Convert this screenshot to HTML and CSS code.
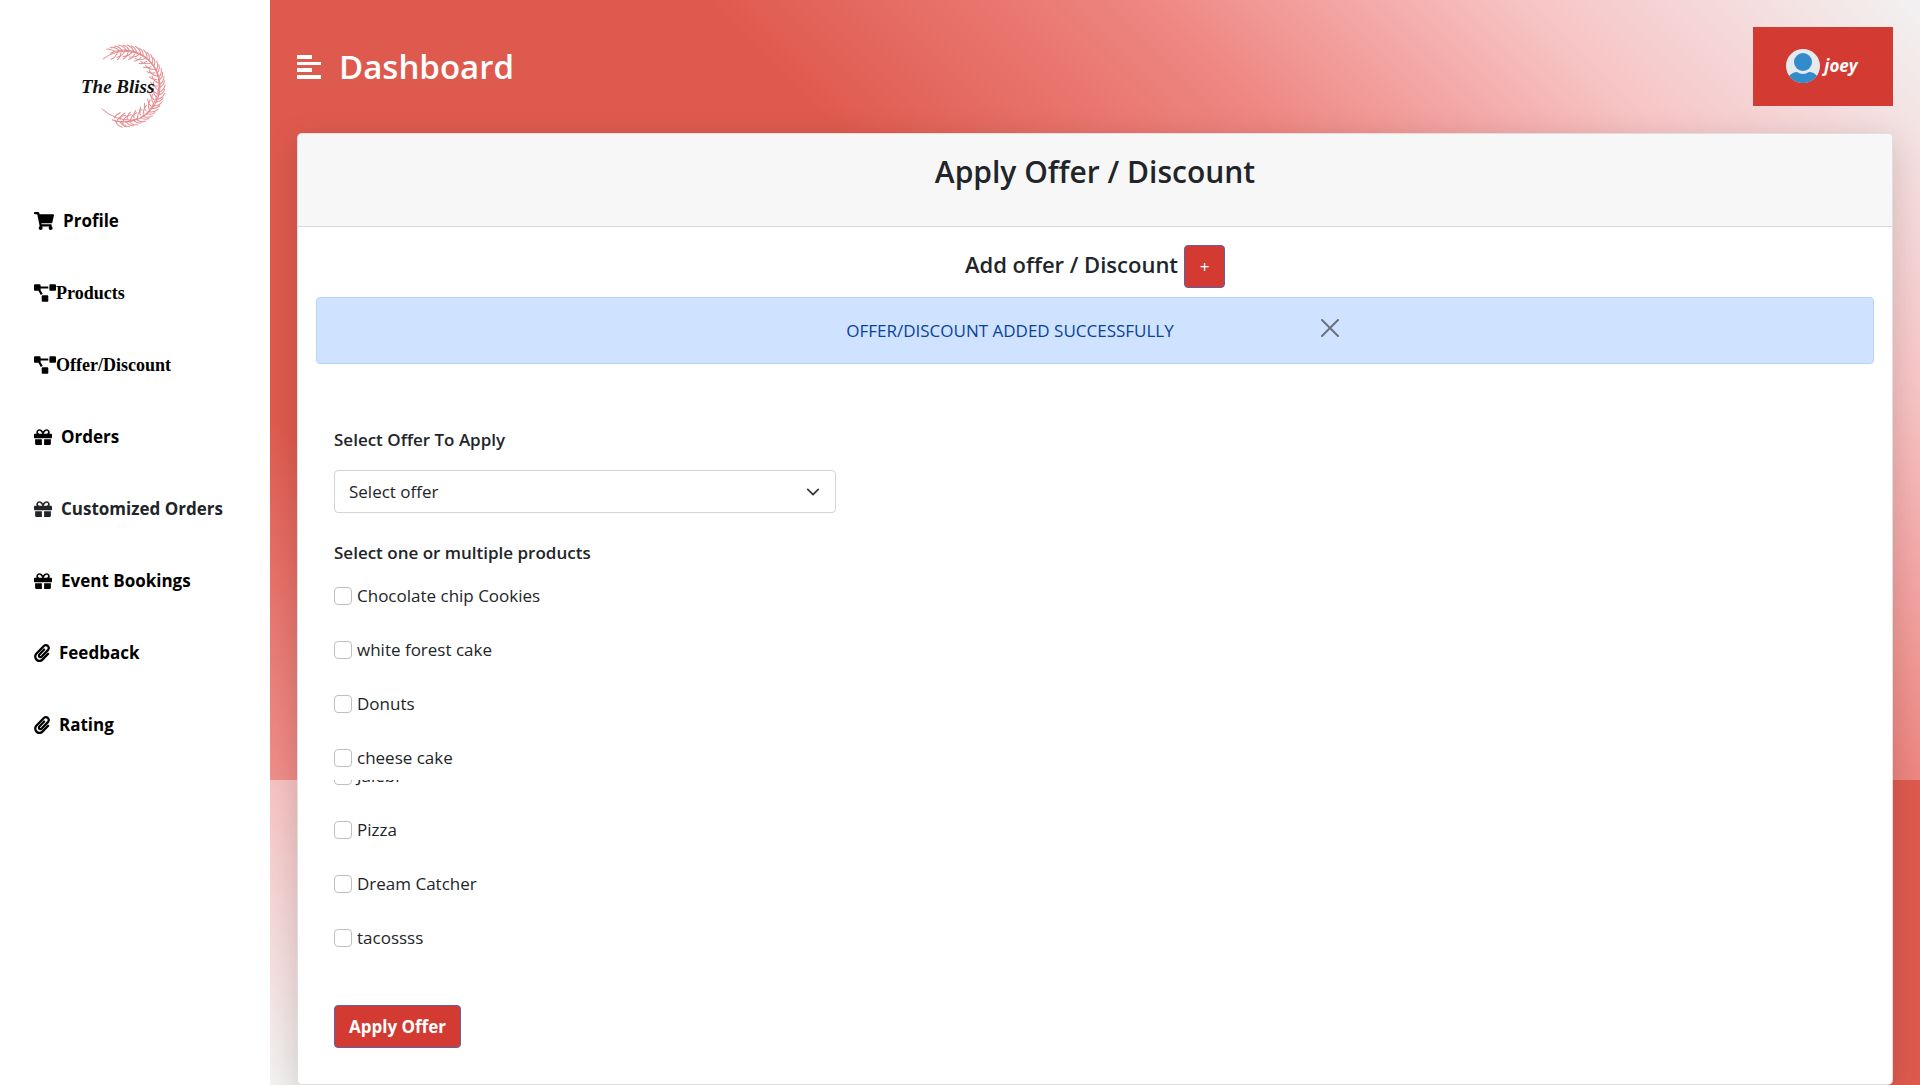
FILE: index.html
```html
<!DOCTYPE html>
<html lang="en">
<head>
<meta charset="utf-8">
<meta name="viewport" content="width=device-width, initial-scale=1">
<title>Dashboard</title>
<link rel="stylesheet" href="styles.css">
</head>
<body>
<svg class="sprite" aria-hidden="true">
  <symbol id="cart" viewBox="0 0 576 512"><path d="M528.12 301.319l47.273-208C578.806 78.301 567.391 64 551.99 64H159.208l-9.166-44.81C147.758 8.021 137.93 0 126.529 0H24C10.745 0 0 10.745 0 24v16c0 13.255 10.745 24 24 24h69.883l70.248 343.435C147.325 417.1 136 435.222 136 456c0 30.928 25.072 56 56 56s56-25.072 56-56c0-15.674-6.447-29.835-16.824-40h209.647C430.447 426.165 424 440.326 424 456c0 30.928 25.072 56 56 56s56-25.072 56-56c0-22.172-12.888-41.332-31.579-50.405l5.517-24.276c3.413-15.018-8.002-29.319-23.403-29.319H218.117l-6.545-32h293.145c11.206 0 20.92-7.754 23.403-18.681z"/></symbol>
  <symbol id="diagram" viewBox="0 0 640 512"><path d="M384 320H256c-17.67 0-32 14.33-32 32v128c0 17.67 14.33 32 32 32h128c17.67 0 32-14.33 32-32V352c0-17.67-14.33-32-32-32zM192 32c0-17.67-14.33-32-32-32H32C14.33 0 0 14.33 0 32v128c0 17.67 14.33 32 32 32h95.72l73.16 128.04C211.98 300.98 232.4 288 256 288h.28L192 175.51V128h224V64H192V32zM608 0H480c-17.67 0-32 14.33-32 32v128c0 17.67 14.33 32 32 32h128c17.67 0 32-14.33 32-32V32c0-17.67-14.33-32-32-32z"/></symbol>
  <symbol id="gift" viewBox="0 0 512 512"><path d="M32 448c0 17.7 14.3 32 32 32h160V320H32v128zm256 32h160c17.7 0 32-14.3 32-32V320H288v160zm192-320h-42.1c6.2-12.1 10.1-25.5 10.1-40 0-48.5-39.5-88-88-88-41.6 0-68.5 21.3-103 68.3-34.5-47-61.4-68.3-103-68.3-48.5 0-88 39.5-88 88 0 14.5 3.8 27.9 10.1 40H32c-17.7 0-32 14.3-32 32v80c0 8.8 7.2 16 16 16h480c8.8 0 16-7.2 16-16v-80c0-17.7-14.3-32-32-32zm-326.1 0c-22.1 0-40-17.9-40-40s17.9-40 40-40c19.9 0 34.6 3.3 86.1 80h-86.1zm206.1 0h-86.1c51.4-76.5 65.7-80 86.1-80 22.1 0 40 17.9 40 40s-17.9 40-40 40z"/></symbol>
  <symbol id="clip" viewBox="0 0 448 512"><path d="M43.246 466.142c-58.43-60.289-57.341-157.511 1.386-217.581L254.392 34c44.316-45.332 116.351-45.336 160.671 0 43.89 44.894 43.943 117.329 0 162.276L232.214 383.128c-29.855 30.537-78.633 30.111-107.982-.998-28.275-29.97-27.368-77.473 1.452-106.953l143.743-146.835c6.182-6.314 16.312-6.422 22.626-.241l22.861 22.379c6.315 6.182 6.422 16.312.241 22.626L171.427 319.927c-4.932 5.045-5.236 13.428-.648 18.292 4.372 4.634 11.245 4.711 15.688.165l182.849-186.851c19.613-20.062 19.613-52.725-.011-72.798-19.189-19.627-49.957-19.637-69.154 0L90.39 293.295c-34.763 35.56-35.299 93.12-1.191 128.313 34.01 35.093 88.985 35.137 123.058.286l172.06-175.999c6.177-6.319 16.307-6.433 22.626-.256l22.877 22.364c6.319 6.177 6.434 16.307.256 22.626l-172.06 175.998c-59.576 60.938-155.943 60.216-214.77-.485z"/></symbol>
</svg>
<div class="layout">
  <aside class="sidebar">
    <svg class="logo" viewBox="0 0 130 110" role="img" aria-label="The Bliss">
      <defs>
        <g id="sprig"><path d="M99 63q2-6 0-12M99 60q5-2 6-8M99 58q-5-2-6-8M100 55q4-3 4-7M97 61q-4-1-6-5"/></g>
      </defs>
      <g class="wreath">
        <path d="M43 29Q56 19 72 22T96 40Q103 56 94 73T72 90Q56 91 42 79"/>
        <use href="#sprig" transform="rotate(-104 64 56)"/>
        <use href="#sprig" transform="rotate(-92 64 56)"/>
        <use href="#sprig" transform="rotate(-80 64 56)"/>
        <use href="#sprig" transform="rotate(-68 64 56)"/>
        <use href="#sprig" transform="rotate(-56 64 56)"/>
        <use href="#sprig" transform="rotate(-44 64 56)"/>
        <use href="#sprig" transform="rotate(-32 64 56)"/>
        <use href="#sprig" transform="rotate(-20 64 56)"/>
        <use href="#sprig" transform="rotate(-8 64 56)"/>
        <use href="#sprig" transform="rotate(4 64 56)"/>
        <use href="#sprig" transform="rotate(16 64 56)"/>
        <use href="#sprig" transform="rotate(28 64 56)"/>
        <use href="#sprig" transform="rotate(40 64 56)"/>
        <use href="#sprig" transform="rotate(52 64 56)"/>
        <use href="#sprig" transform="rotate(64 64 56)"/>
        <use href="#sprig" transform="rotate(76 64 56)"/>
        <use href="#sprig" transform="rotate(88 64 56)"/>
        <use href="#sprig" transform="rotate(98 64 56)"/>
      </g>
      <text class="logo-text" x="21" y="63">The Bliss</text>
    </svg>
    <nav class="nav">
      <a href="#"><svg class="w20"><use href="#cart"/></svg>Profile</a>
      <a href="#" class="serif"><svg class="w22"><use href="#diagram"/></svg>Products</a>
      <a href="#" class="serif"><svg class="w22"><use href="#diagram"/></svg>Offer/Discount</a>
      <a href="#"><svg class="w18"><use href="#gift"/></svg>Orders</a>
      <a href="#" class="soft"><svg class="w18"><use href="#gift"/></svg>Customized Orders</a>
      <a href="#"><svg class="w18"><use href="#gift"/></svg>Event Bookings</a>
      <a href="#"><svg class="w16"><use href="#clip"/></svg>Feedback</a>
      <a href="#"><svg class="w16"><use href="#clip"/></svg>Rating</a>
    </nav>
  </aside>
  <main class="main">
    <header class="topbar">
      <svg class="menu" viewBox="0 0 24 24"><path d="M0 0h15v4H0zM0 7h24v3H0zM0 13h15v4H0zM0 20h24v4H0z"/></svg>
      <h1>Dashboard</h1>
      <button class="user" type="button">
        <svg viewBox="0 0 34 34"><defs><clipPath id="disc"><circle cx="17" cy="17" r="17"/></clipPath></defs><g clip-path="url(#disc)"><path fill="#e6eaed" d="M0 0h34v34H0z"/><path fill="#328bca" d="M3 27q4-4 8-4q6 4 12 0q5 0 8 4v8H3z"/><circle cx="17" cy="13" r="9" fill="#328bca"/></g></svg>
        joey
      </button>
    </header>
    <section class="card">
      <div class="card-head"><h2>Apply Offer / Discount</h2></div>
      <div class="card-body">
        <div class="add"><h3>Add offer / Discount</h3><button class="btn plus" type="button" aria-label="Add">+</button></div>
        <div class="alert" role="alert">
          <span>OFFER/DISCOUNT ADDED SUCCESSFULLY</span>
          <button class="close" type="button" aria-label="Close"><svg viewBox="0 0 18 18"><path d="M1 1l16 16M17 1L1 17"/></svg></button>
        </div>
        <form class="form">
          <label class="title" for="offer">Select Offer To Apply</label>
          <select id="offer"><option>Select offer</option></select>
          <fieldset>
            <legend class="title">Select one or multiple products</legend>
            <label class="check"><input type="checkbox">Chocolate chip Cookies</label>
            <label class="check"><input type="checkbox">white forest cake</label>
            <label class="check"><input type="checkbox">Donuts</label>
            <label class="check"><input type="checkbox">cheese cake</label>
            <label class="check cut"><input type="checkbox">Jalebi</label>
            <label class="check"><input type="checkbox">Pizza</label>
            <label class="check"><input type="checkbox">Dream Catcher</label>
            <label class="check"><input type="checkbox">tacossss</label>
          </fieldset>
          <button class="btn apply" type="button">Apply Offer</button>
        </form>
      </div>
    </section>
  </main>
</div>
</body>
</html>
```
FILE: styles.css
```css
* { box-sizing: border-box; }
body {
  margin: 0;
  font: 400 17px/26px "Open Sans", "Noto Sans", sans-serif;
  color: #212529;
  background: #fff;
}
h1, h2, h3 { margin: 0; font-weight: 600; }
button, select { font: inherit; }
.sprite { position: absolute; width: 0; height: 0; }
.layout { display: flex; min-height: 100vh; }

.sidebar { position: relative; z-index: 1; flex: none; width: 270px; background: #fff; }
.logo { display: block; width: 130px; height: 110px; margin: 30px 0 0 60px; }
.wreath { fill: none; stroke: #e58a8e; stroke-width: 1; stroke-linecap: round; }
.logo-text { font: italic 700 19px "Liberation Serif", cursive; fill: #111; }
.nav { display: flex; flex-direction: column; gap: 46px; padding: 68px 0 0 34px; }
.nav a {
  display: flex;
  align-items: center;
  gap: 9px;
  height: 26px;
  color: #000;
  font-weight: 700;
  font-size: 17px;
  text-decoration: none;
}
.nav a.serif { gap: 0; font-family: "Liberation Serif", serif; font-size: 18px; }
.nav a.soft { color: #212529; }
.nav svg { height: 18px; fill: currentColor; }
.w16 { width: 16px; }
.w18 { width: 18px; }
.w20 { width: 20px; }
.w22 { width: 22px; }

.main {
  flex: 1;
  min-width: 0;
  padding: 27px 27px 0;
  background:
    linear-gradient(45deg, #ef8f8b 0, #df5a4e 260px, #df5a4e 860px, #ee8681 1167px, #f7c5c6 1443px, #f2f2f2 1719px) top / 100% 780px no-repeat,
    linear-gradient(45deg, #f2f2f2 0, #f6c3c3 216px, #ef8f8b 490px, #df5a4e 730px) bottom / 100% calc(100% - 780px) no-repeat;
}
.topbar { display: flex; align-items: center; gap: 18px; height: 79px; margin-bottom: 27px; color: #fff; }
.topbar h1 { flex: 1; font-size: 33px; line-height: 44px; }
.menu { width: 24px; height: 24px; fill: #fff; }
.user {
  display: flex;
  align-items: center;
  justify-content: center;
  gap: 4px;
  width: 140px;
  height: 79px;
  padding: 0 2px 2px 0;
  border: 0;
  background: #d33a32;
  color: #fff;
  font-weight: 700;
  font-style: italic;
}
.user svg { width: 34px; height: 34px; }

.card {
  background: #fff;
  border: 1px solid rgba(0, 0, 0, .125);
  border-radius: 5px;
  box-shadow: 0 8px 32px rgba(0, 0, 0, .15);
}
.card-head {
  height: 93px;
  padding-top: 18px;
  background: #f7f7f7;
  border-bottom: 1px solid #d8d9da;
  border-radius: 4px 4px 0 0;
  text-align: center;
}
.card-head h2 { font-size: 30px; line-height: 40px; }
.card-body { padding: 18px; }
.add { display: flex; justify-content: center; gap: 6px; height: 52px; }
.add h3 { font-size: 22px; line-height: 38px; }
.btn { height: 43px; border: 1px solid #5a62b0; border-radius: 4px; background: #d33a32; color: #fff; }
.plus { width: 41px; padding: 0; }
.alert {
  display: flex;
  align-items: center;
  justify-content: center;
  height: 67px;
  border: 1px solid #b6d4fe;
  border-radius: 4px;
  background: #cfe2ff;
  color: #084298;
}
.alert .close { width: 28px; height: 28px; margin: 0 0 6px 142px; padding: 5px; border: 0; background: none; }
.close svg { display: block; width: 18px; height: 18px; fill: none; stroke: #687180; stroke-width: 2; stroke-linecap: round; }
.form { display: flex; flex-direction: column; align-items: flex-start; padding: 63px 18px 18px; }
.title { font-weight: 600; font-size: 17px; line-height: 26px; padding: 0; }
select {
  width: 33%;
  height: 43px;
  margin: 17px 0 27px;
  padding: 0 14px;
  border: 1px solid #ced4da;
  border-radius: 4px;
  color: #212529;
  appearance: none;
  background: #fff url("data:image/svg+xml,%3Csvg xmlns='http://www.w3.org/2000/svg' viewBox='0 0 16 16'%3E%3Cpath fill='none' stroke='%23343a40' stroke-linecap='round' stroke-linejoin='round' stroke-width='2' d='M2 5l6 6 6-6'/%3E%3C/svg%3E") right 14px center / 16px 14px no-repeat;
}
fieldset { display: flex; flex-direction: column; gap: 28px; margin: 0; padding: 17px 0 0; border: 0; }
.check { display: flex; align-items: center; gap: 5px; height: 26px; }
.check input { width: 18px; height: 18px; margin: 0; border: 1px solid #bfbfbf; border-radius: 4px; appearance: none; background: #fff; }
.cut { align-items: flex-end; height: 9px; margin-top: -19px; overflow: hidden; }
.cut input { margin-bottom: 4px; }
.apply { margin-top: 54px; padding: 0 14px; font-weight: 700; }
```
